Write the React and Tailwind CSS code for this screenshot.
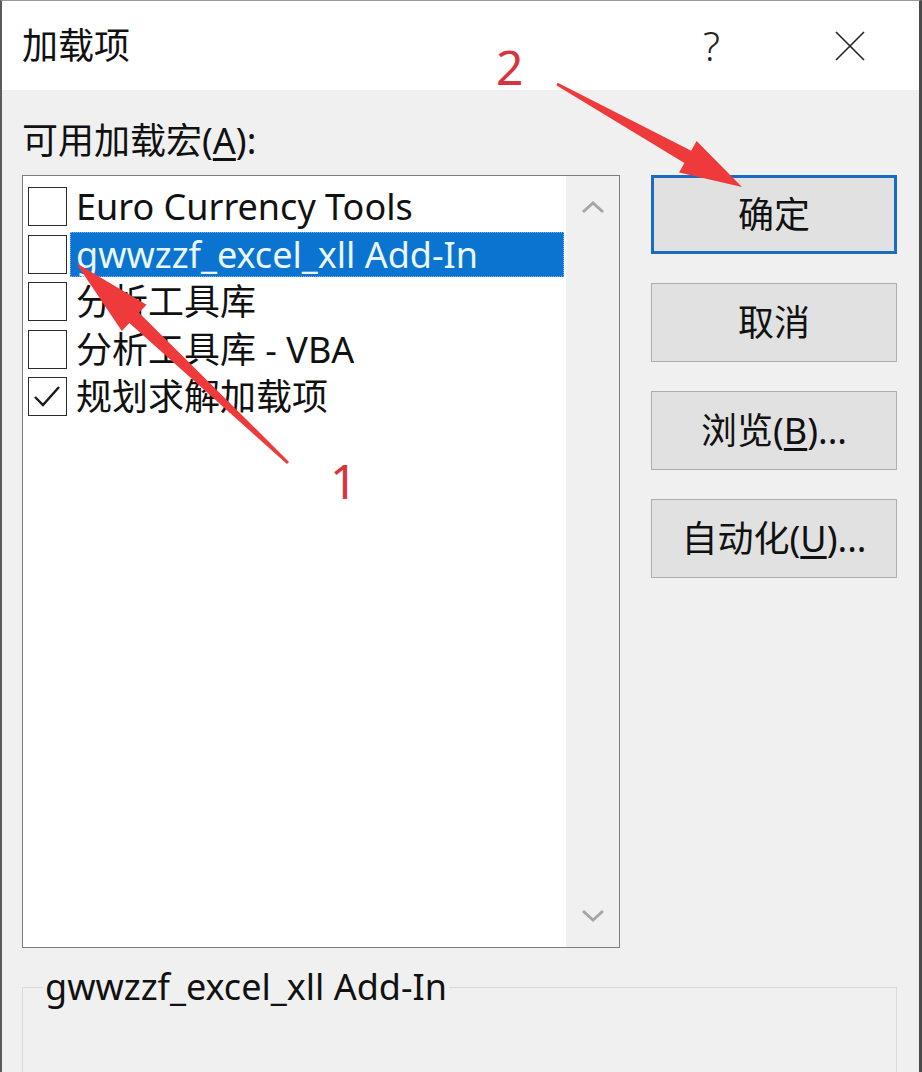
import React from 'react';

const font = { fontFamily: '"Noto Sans", "Noto Sans CJK SC", sans-serif' };

const items = [
  { id: 1, label: 'Euro Currency Tools', checked: false },
  { id: 2, label: 'gwwzzf_excel_xll Add-In', checked: false, selected: true },
  { id: 3, label: '分析工具库', checked: false },
  { id: 4, label: '分析工具库 - VBA', checked: false },
  { id: 5, label: '规划求解加载项', checked: true },
];

const buttons = [
  { id: 'ok', label: '确定', primary: true },
  { id: 'cancel', label: '取消' },
  { id: 'browse', label: '浏览', key: 'B', dots: true },
  { id: 'auto', label: '自动化', key: 'U', dots: true },
];

// tapered arrow polygon: thin at the tail, wide head at the tip
const arrowPoints = (tail, tip, headLen, headHalf, neckHalf, tailHalf) => {
  const dx = tip[0] - tail[0];
  const dy = tip[1] - tail[1];
  const len = Math.hypot(dx, dy);
  const ux = dx / len;
  const uy = dy / len;
  const nx = -uy;
  const ny = ux;
  const bx = tip[0] - ux * headLen;
  const by = tip[1] - uy * headLen;
  const pts = [
    [tail[0] + nx * tailHalf, tail[1] + ny * tailHalf],
    [bx + nx * neckHalf, by + ny * neckHalf],
    [bx + nx * headHalf, by + ny * headHalf],
    tip,
    [bx - nx * headHalf, by - ny * headHalf],
    [bx - nx * neckHalf, by - ny * neckHalf],
    [tail[0] - nx * tailHalf, tail[1] - ny * tailHalf],
  ];
  return pts.map((p) => p.join(',')).join(' ');
};

const Checkbox = ({ checked }) => (
  <div className="w-[39px] h-[39px] shrink-0 ml-[5px] border-[1.5px] border-[#2b2b2b] bg-white">
    {checked && (
      <svg width="36" height="36" viewBox="0 0 36 36">
        <polyline points="6,19 14,27 30,9" fill="none" stroke="#1a1a1a" strokeWidth="2.4" />
      </svg>
    )}
  </div>
);

export default function App() {
  return (
    <div
      className="relative w-[922px] h-[1072px] overflow-hidden bg-[#f0f0f0] border-l-2 border-r-[3px] border-t border-l-[#5b5b5b] border-r-[#4a4a4a] border-t-[#9a9a9a] text-[#111]"
      style={font}
    >
      {/* Title bar */}
      <div className="h-[89px] bg-white flex items-center pl-[20px] pr-[53px]">
        <span className="text-[36px] leading-none">加载项</span>
        <span className="ml-auto text-[40px] leading-none text-[#222] font-light">?</span>
        <svg className="ml-[114px]" width="32" height="32" viewBox="0 0 32 32">
          <path d="M2 2 L30 30 M30 2 L2 30" stroke="#222" strokeWidth="1.6" />
        </svg>
      </div>

      {/* Body */}
      <div className="pl-[20px] pr-[22px] pt-[31px]">
        <div className="text-[36px] leading-[40px]">
          可用加载宏(<span className="underline underline-offset-4">A</span>):
        </div>

        <div className="flex gap-[31px] mt-[14px]">
          {/* List box */}
          <div className="w-[598px] h-[773px] border border-[#7d7d7d] bg-white flex">
            <div className="flex-1 pt-[7px]">
              {items.map((item) => (
                <div key={item.id} className="h-[47.5px] flex items-center">
                  <Checkbox checked={item.checked} />
                  <div
                    className={`flex-1 ml-[3px] mr-[2px] h-[45px] flex items-center pl-[6px] text-[36px] leading-[45px] whitespace-nowrap ${
                      item.selected ? 'bg-[#0a74d0] text-[#eaf7ff] outline-1 outline-dotted outline-[#7fb4e6] -outline-offset-1' : ''
                    }`}
                  >
                    {item.label}
                  </div>
                </div>
              ))}
            </div>
            <div className="w-[53px] bg-[#f0f0f0] flex flex-col items-center justify-between py-[24px]">
              <svg width="24" height="14" viewBox="0 0 24 14">
                <polyline points="2,12 12,3 22,12" fill="none" stroke="#a6a6a6" strokeWidth="3" />
              </svg>
              <svg width="24" height="14" viewBox="0 0 24 14">
                <polyline points="2,2 12,11 22,2" fill="none" stroke="#a6a6a6" strokeWidth="3" />
              </svg>
            </div>
          </div>

          {/* Buttons */}
          <div className="w-[246px] flex flex-col gap-[29px]">
            {buttons.map((b) => (
              <button
                key={b.id}
                className={`h-[79px] bg-[#e1e1e1] flex items-center justify-center text-[36px] leading-none ${
                  b.primary ? 'border-[3px] border-[#1a6cc2]' : 'border border-[#adadad]'
                }`}
              >
                {b.label}
                {b.key && (
                  <span>
                    (<span className="underline underline-offset-4">{b.key}</span>)
                  </span>
                )}
                {b.dots && <span>...</span>}
              </button>
            ))}
          </div>
        </div>

        {/* Description group */}
        <fieldset className="mt-[19px] h-[140px] border border-[#d9d9d9]">
          <legend className="ml-[20px] px-[2px] text-[36px] leading-[40px]">gwwzzf_excel_xll Add-In</legend>
        </fieldset>
      </div>

      {/* Red annotation arrows */}
      <svg className="absolute inset-0 pointer-events-none" width="922" height="1072" viewBox="0 0 922 1072">
        <polygon points={arrowPoints([286, 462], [74, 262], 80, 18, 7, 1.5)} fill="#ee3a3a" />
        <polygon points={arrowPoints([555, 83], [740, 186], 62, 18, 7, 1.5)} fill="#ee3a3a" />
        <text x="328" y="498" fontSize="48" fill="#d8343c" fontFamily="Noto Sans, sans-serif">1</text>
        <text x="494" y="84" fontSize="48" fill="#d8343c" fontFamily="Noto Sans, sans-serif">2</text>
      </svg>
    </div>
  );
}
